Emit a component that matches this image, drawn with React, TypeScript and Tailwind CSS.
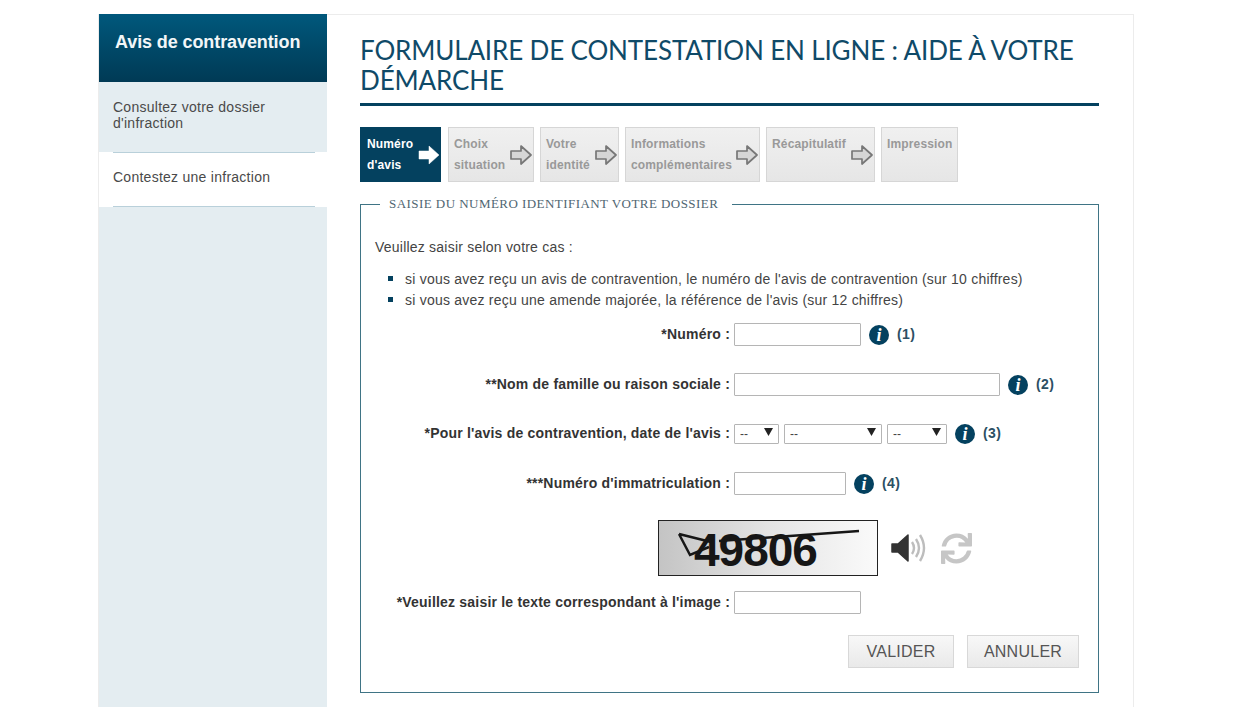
import { FaSync } from "react-icons/fa";

const sans = "font-['Liberation_Sans',Arial,sans-serif]";

function Arrow({ active }: { active?: boolean }) {
  return (
    <svg width="22" height="20" viewBox="0 0 22 20" className="shrink-0">
      <polygon
        points="1,6 11,6 11,1 21,10 11,19 11,14 1,14"
        fill={active ? "#ffffff" : "#d6d6d6"}
        stroke={active ? "#ffffff" : "#777777"}
        strokeWidth={active ? 0.5 : 1.7}
        strokeLinejoin="round"
      />
    </svg>
  );
}

function Step({ lines, width, active, arrow = true, compact }: { lines: string[]; width: string; active?: boolean; arrow?: boolean; compact?: boolean }) {
  return (
    <div
      className={`${width} h-[55px] flex items-center justify-between pr-[1px] text-[12px] font-bold leading-[21px] tracking-[0.15px] ${
        active
          ? "bg-[#04415f] text-white pl-[7px]"
          : "bg-gradient-to-b from-[#f0f0f0] to-[#e6e6e6] border border-[#d6d6d6] text-[#999999] pl-[5px]"
      }`}
    >
      <div className={`${compact ? "self-start pt-[6px]" : ""} whitespace-nowrap`}>
        {lines.map((l) => (
          <div key={l}>{l}</div>
        ))}
      </div>
      {arrow && <Arrow active={active} />}
    </div>
  );
}

function Info({ n }: { n: number }) {
  return (
    <div className="flex items-center gap-[8px] ml-[8px]">
      <div className="w-[20px] h-[20px] rounded-full bg-[#04415f] flex items-center justify-center text-white text-[18px] font-bold italic leading-none font-['Liberation_Serif',serif]">
        i
      </div>
      <span className="text-[14px] font-bold text-[#2c4f64] tracking-[0.4px] -mt-[1px]">({n})</span>
    </div>
  );
}

function Row({ label, className, children }: { label: string; className: string; children: React.ReactNode }) {
  return (
    <div className={`flex items-center ${className}`}>
      <label className="w-[355px] shrink-0 flex justify-end text-[14px] font-bold text-[#333] whitespace-nowrap tracking-[0.2px]">{label}</label>
      <div className="flex items-center ml-[4px]">{children}</div>
    </div>
  );
}

function TextBox({ width }: { width: string }) {
  return <input className={`${width} h-[23px] bg-white border border-[#b5b5b5] rounded-[1px] outline-none`} />;
}

function Sel({ width }: { width: string }) {
  return (
    <div className={`${width} h-[20px] border border-[#b5b5b5] rounded-[1px] bg-white flex items-center justify-between pl-[5px] pr-[5px] text-[12px] text-[#444]`}>
      <span>--</span>
      <svg width="9" height="8" viewBox="0 0 9 8" className="-mt-[3px]">
        <polygon points="0,0 9,0 4.5,8" fill="#222" />
      </svg>
    </div>
  );
}

function Btn({ children, width }: { children: React.ReactNode; width: string }) {
  return (
    <button className={`${width} h-[33px] bg-gradient-to-b from-[#f8f8f8] to-[#e9e9e9] border border-[#d8d8d8] text-[16px] tracking-[0.25px] text-[#555] flex items-center justify-center`}>
      {children}
    </button>
  );
}

export default function App() {
  return (
    <div className={`h-[707px] w-[1256px] overflow-hidden bg-white pt-[14px] ${sans}`}>
      <div className="flex ml-[98px] w-[1036px] h-[693px] border-l border-r border-t border-[#ececec]">
        <aside className="w-[228px] shrink-0 bg-[#e4edf1] -mt-px">
          <div className="h-[68px] bg-gradient-to-b from-[#00587c] to-[#003a55] pl-[16px] pt-[17px] text-[18px] leading-[22px] tracking-[-0.1px] font-bold text-[#f2f6f8]">
            Avis de contravention
          </div>
          <div className="h-[70px] pl-[14px] pr-[12px] pt-[17px] text-[14px] leading-[16px] tracking-[0.26px] text-[#4a4a4a]">
            Consultez votre dossier
            <br />
            d'infraction
          </div>
          <div className="bg-white h-[55px] pl-[14px] pt-[17px] text-[14px] leading-[16px] tracking-[0.26px] text-[#4a4a4a] relative">
            <div className="absolute left-[14px] right-[12px] top-0 h-px bg-[#b9d0da]" />
            <div className="absolute left-[14px] right-[12px] bottom-0 h-px bg-[#b9d0da]" />
            Contestez une infraction
          </div>
        </aside>
        <main className="flex-1 pl-[33px] pr-[34px] pt-[20px]">
          <h1 className="font-['Lato',sans-serif] text-[26px] leading-[30px] text-[#0f4a68] uppercase border-b-[3px] border-[#04415f] pb-[8px] tracking-[-0.14px]">
            Formulaire de contestation en ligne : aide à votre démarche
          </h1>
          <div className="flex gap-[6px] mt-[21px]">
            <Step lines={["Numéro", "d'avis"]} width="w-[81px] mr-[1px]" active />
            <Step lines={["Choix", "situation"]} width="w-[86px]" />
            <Step lines={["Votre", "identité"]} width="w-[79px]" />
            <Step lines={["Informations", "complémentaires"]} width="w-[135px]" />
            <Step lines={["Récapitulatif"]} width="w-[109px]" compact />
            <Step lines={["Impression"]} width="w-[77px]" arrow={false} compact />
          </div>
          <fieldset className="mt-[15px] h-[496px] border border-[#3f7485] pl-[14px] pr-[14px]">
            <legend className="ml-[5px] pl-[9px] pr-[14px] text-[13px] leading-[14px] text-[#4f6672] font-['Liberation_Serif',serif] whitespace-nowrap tracking-[0.45px]">
              SAISIE DU NUMÉRO IDENTIFIANT VOTRE DOSSIER
            </legend>
            <p className="text-[14px] leading-[16px] text-[#444] tracking-[0.22px] mt-[28px]">Veuillez saisir selon votre cas :</p>
            <ul className="mt-[14px] text-[14px] leading-[21px] text-[#444] tracking-[0.22px]">
              {[
                "si vous avez reçu un avis de contravention, le numéro de l'avis de contravention (sur 10 chiffres)",
                "si vous avez reçu une amende majorée, la référence de l'avis (sur 12 chiffres)",
              ].map((t) => (
                <li key={t} className="flex items-center pl-[13px] whitespace-nowrap">
                  <span className="w-[5px] h-[5px] bg-[#04415f] mr-[12px] -mt-[3px] shrink-0" />
                  {t}
                </li>
              ))}
            </ul>
            <Row label="*Numéro :" className="mt-[12px]">
              <TextBox width="w-[127px]" />
              <Info n={1} />
            </Row>
            <Row label="**Nom de famille ou raison sociale :" className="mt-[27px]">
              <TextBox width="w-[266px]" />
              <Info n={2} />
            </Row>
            <Row label="*Pour l'avis de contravention, date de l'avis :" className="mt-[27px]">
              <div className="flex gap-[5px]">
                <Sel width="w-[45px]" />
                <Sel width="w-[98px]" />
                <Sel width="w-[60px]" />
              </div>
              <Info n={3} />
            </Row>
            <Row label="***Numéro d'immatriculation :" className="mt-[28px]">
              <TextBox width="w-[112px]" />
              <Info n={4} />
            </Row>
            <div className="flex items-center ml-[283px] mt-[25px]">
              <div className="relative w-[220px] h-[56px] border border-[#222] bg-gradient-to-r from-[#c4c4c4] via-[#e4e4e4] to-[#fafafa] flex items-center pl-[35px] overflow-hidden">
                <span className="text-[46px] font-bold leading-none tracking-[-1px] text-[#161616] mt-[3px]">49806</span>
                <svg width="220" height="56" viewBox="0 0 220 56" className="absolute left-0 top-0">
                  <path d="M20 13 L31 34 L50 26 M20 13 L52 21 M60 20 L200 10" stroke="#161616" strokeWidth="2.5" fill="none" />
                </svg>
              </div>
              <svg width="38" height="32" viewBox="0 0 38 32" className="ml-[12px]">
                <path d="M2 12 H8 L18 3 V29 L8 20 H2 Z" fill="#333333" stroke="#333333" strokeWidth="1.5" strokeLinejoin="round" />
                <path d="M22 10 Q26 16 22 22 M26 7 Q32 16 26 25 M30 3 Q38 16 30 29" stroke="#bdbdbd" strokeWidth="2.4" fill="none" />
              </svg>
              <FaSync className="ml-[13px] text-[#c6c6c6]" size={31} />
            </div>
            <Row label="*Veuillez saisir le texte correspondant à l'image :" className="mt-[15px]">
              <TextBox width="w-[127px]" />
            </Row>
            <div className="flex justify-end gap-[13px] mt-[21px] pr-[5px]">
              <Btn width="w-[106px]">VALIDER</Btn>
              <Btn width="w-[112px]">ANNULER</Btn>
            </div>
          </fieldset>
        </main>
      </div>
    </div>
  );
}
